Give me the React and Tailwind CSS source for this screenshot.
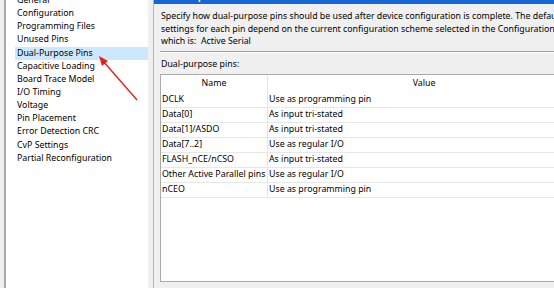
import React from 'react';

const categories = [
    'General',
    'Configuration',
    'Programming Files',
    'Unused Pins',
    'Dual-Purpose Pins',
    'Capacitive Loading',
    'Board Trace Model',
    'I/O Timing',
    'Voltage',
    'Pin Placement',
    'Error Detection CRC',
    'CvP Settings',
    'Partial Reconfiguration',
];

const pins = [
    ['DCLK', 'Use as programming pin'],
    ['Data[0]', 'As input tri-stated'],
    ['Data[1]/ASDO', 'As input tri-stated'],
    ['Data[7..2]', 'Use as regular I/O'],
    ['FLASH_nCE/nCSO', 'As input tri-stated'],
    ['Other Active Parallel pins', 'Use as regular I/O'],
    ['nCEO', 'Use as programming pin'],
];

export default function App() {
    return (
        <div className="relative flex w-[554px] h-[288px] overflow-hidden bg-[#f0f0f0] text-black text-[8.8px] font-['Noto_Sans',sans-serif]">
            {/* Category list */}
            <div className="w-[153px] h-full pl-[4px] pr-[5px] shrink-0">
                <div className="h-full bg-white border-l-2 border-[#a9a9a9] overflow-hidden">
                    <div className="mt-[-6px]">
                        {categories.map((c) => (
                            <div
                                key={c}
                                className={`h-[13.15px] ml-[9px] pl-[2px] flex items-center whitespace-nowrap ${c === 'Dual-Purpose Pins' ? 'bg-[#cce8ff]' : ''}`}
                            >
                                {c}
                            </div>
                        ))}
                    </div>
                </div>
            </div>

            {/* Splitter */}
            <div className="w-px h-full bg-[#b4b4b4] shrink-0" />

            {/* Settings page */}
            <div className="flex-1 min-w-0 h-full flex flex-col overflow-hidden">
                <div className="h-[4px] bg-[#1566d6] overflow-hidden pl-[6px]">
                    <div className="mt-[-9px] text-white font-bold whitespace-nowrap leading-[12px]">Dual-Purpose Pins</div>
                </div>

                <div className="pl-[7px] pt-[6px] leading-[12.5px] whitespace-nowrap">
                    <div>Specify how dual-purpose pins should be used after device configuration is complete. The default</div>
                    <div>settings for each pin depend on the current configuration scheme selected in the Configuration page,</div>
                    <div>which is:&nbsp; Active Serial</div>
                </div>

                <div className="ml-[6px] mt-[3px] h-[2px] border-t border-[#a0a0a0] border-b border-b-white" />

                <div className="pl-[7px] mt-[5px] leading-[12.5px]">Dual-purpose pins:</div>

                <div className="ml-[6px] mt-[4px] w-[421px] h-[208px] bg-white border border-[#ababab] flex flex-col">
                    <div className="flex h-[18px] items-center shrink-0">
                        <div className="w-[107px] h-full flex items-center justify-center border-r border-[#e5e5e5]">Name</div>
                        <div className="flex-1 h-full flex items-center justify-center">Value</div>
                    </div>
                    {pins.map(([name, value]) => (
                        <div key={name} className="flex h-[15px] border-b border-[#e8e8e8] shrink-0">
                            <div className="w-[107px] pl-[1px] flex items-center whitespace-nowrap border-r border-[#e5e5e5]">{name}</div>
                            <div className="flex-1 pl-[1px] flex items-center whitespace-nowrap">{value}</div>
                        </div>
                    ))}
                </div>
            </div>

            {/* Annotation arrow */}
            <svg className="absolute left-0 top-0 pointer-events-none" width="554" height="288">
                <line x1="137" y1="100" x2="103" y2="61" stroke="#e8201c" strokeWidth="1.4" />
                <polygon points="99,56 108,61 102,66" fill="#e8201c" />
            </svg>
        </div>
    );
}
